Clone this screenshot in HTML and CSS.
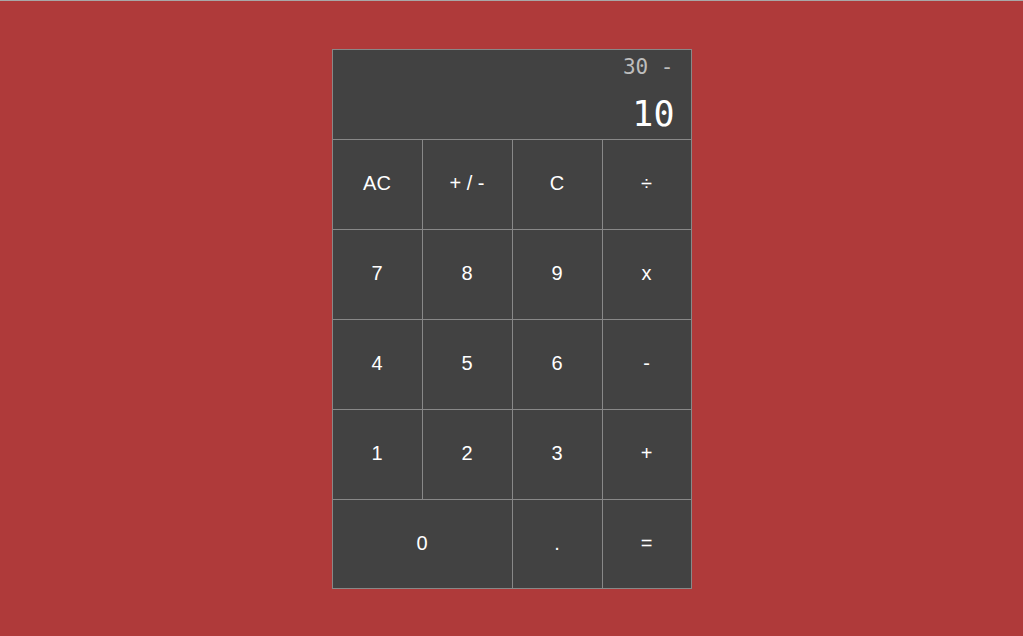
FILE: index.html
```html
<!DOCTYPE html>
<html lang="en">
<head>
<meta charset="utf-8">
<title>Calculator</title>
<link rel="stylesheet" href="styles.css">
</head>
<body>
<div class="page">
  <div class="calculator">
    <div class="output">
      <div class="previous">30 -</div>
      <div class="current">10</div>
    </div>
    <button class="key">AC</button>
    <button class="key">+ / -</button>
    <button class="key">C</button>
    <button class="key">÷</button>
    <button class="key">7</button>
    <button class="key">8</button>
    <button class="key">9</button>
    <button class="key">x</button>
    <button class="key">4</button>
    <button class="key">5</button>
    <button class="key">6</button>
    <button class="key">-</button>
    <button class="key">1</button>
    <button class="key">2</button>
    <button class="key">3</button>
    <button class="key">+</button>
    <button class="key span-two">0</button>
    <button class="key">.</button>
    <button class="key">=</button>
  </div>
</div>
</body>
</html>
```
FILE: styles.css
```css
* { box-sizing: border-box; }
html, body { margin: 0; padding: 0; }
body {
  background: #af3a3a;
  border-top: 1px solid #a8a8a8;
  height: 636px;
  overflow: hidden;
}
.page {
  height: 636px;
  display: flex;
  justify-content: center;
  align-items: center;
}
.calculator {
  display: grid;
  grid-template-columns: 89px 89px 89px 88px;
  grid-template-rows: repeat(5, 89px) 88px;
  gap: 1px;
  background: #888888;
  border: 1px solid #888888;
}
.output {
  grid-column: 1 / -1;
  background: #424242;
  display: flex;
  flex-direction: column;
  justify-content: space-between;
  align-items: flex-end;
  padding: 5px 16px 5px;
  font-family: "DejaVu Sans Mono", monospace;
}
.previous {
  color: #bdbdbd;
  font-size: 21px;
  margin-right: 1px;
}
.current {
  color: #ffffff;
  font-size: 35px;
  font-variant-numeric: slashed-zero;
}
.key {
  background: #424242;
  color: #ffffff;
  border: 0;
  margin: 0;
  padding: 0 0 2px;
  font-family: "Liberation Sans", Arial, sans-serif;
  font-size: 20px;
  display: flex;
  align-items: center;
  justify-content: center;
}
.span-two { grid-column: span 2; }
```
